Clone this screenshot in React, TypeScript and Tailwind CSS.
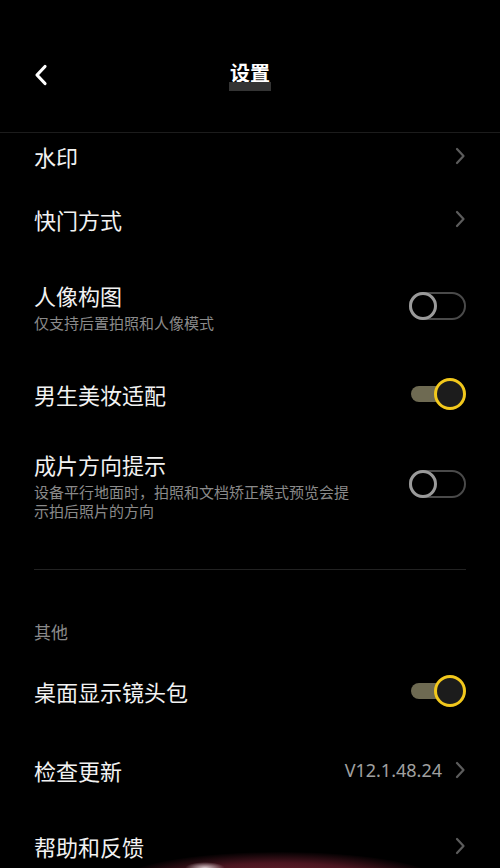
import React from "react";

const font = { fontFamily: '"Noto Sans CJK SC", "Noto Sans", sans-serif' };

function Chevron() {
  return (
    <svg width="12" height="18" viewBox="0 0 12 18" className="shrink-0">
      <path d="M3 2 L9.5 9 L3 16" fill="none" stroke="#5c5c5c" strokeWidth="2.2" strokeLinecap="round" strokeLinejoin="round" />
    </svg>
  );
}

function Toggle({ on }: { on: boolean }) {
  if (on) {
    return (
      <div className="flex items-center w-[57px] h-[32px] shrink-0 pl-[2px]">
        <div className="w-[44px] h-[16px] rounded-full bg-[#6e6a52] shrink-0" />
        <div className="-ml-[21px] w-[32px] h-[32px] rounded-full border-[3px] border-[#f2c81c] bg-[#1c1c1c] shrink-0" />
      </div>
    );
  }
  return (
    <div className="flex items-center w-[57px] h-[28px] shrink-0 rounded-full border-[2.5px] border-[#4a4a4a]">
      <div className="-ml-[2.5px] w-[28px] h-[28px] rounded-full border-[3px] border-[#9a9a9a] bg-black shrink-0" />
    </div>
  );
}

function Row({
  h,
  title,
  sub,
  right,
}: {
  h: number;
  title: string;
  sub?: string[];
  right: React.ReactNode;
}) {
  return (
    <div className="flex items-center justify-between px-[34px]" style={{ height: h }}>
      <div className="flex flex-col">
        <div className="text-[22px] leading-[30px] text-[#f2f2f2]">{title}</div>
        {sub && (
          <div className="mt-[3px] text-[15px] leading-[19px] text-[#8a8a8a] w-[330px]">
            {sub.map((s, i) => (
              <div key={i}>{s}</div>
            ))}
          </div>
        )}
      </div>
      <div className="flex items-center gap-[12px]">{right}</div>
    </div>
  );
}

export default function App() {
  return (
    <div className="relative w-[500px] h-[868px] overflow-hidden bg-black" style={font}>
      <header className="grid grid-cols-[1fr_auto_1fr] items-start h-[133px] border-b border-[#1c1c1c] px-[34px] pt-[62px]">
        <div className="pt-[2px]">
          <svg width="14" height="22" viewBox="0 0 14 22">
            <path d="M11 2.5 L3 11 L11 19.5" fill="none" stroke="#ffffff" strokeWidth="3.2" strokeLinecap="round" strokeLinejoin="round" />
          </svg>
        </div>
        <div className="flex flex-col items-center">
          <div className="text-[20px] leading-[22px] font-bold text-white">设置</div>
          <div className="-mt-[2px] w-[42px] h-[9px] bg-[#343434]" />
        </div>
        <div />
      </header>

      <Row h={46} title="水印" right={<Chevron />} />
      <Row h={80} title="快门方式" right={<Chevron />} />
      <Row h={93} title="人像构图" sub={["仅支持后置拍照和人像模式"]} right={<Toggle on={false} />} />
      <Row h={84} title="男生美妆适配" right={<Toggle on={true} />} />
      <Row
        h={96}
        title="成片方向提示"
        sub={["设备平行地面时，拍照和文档矫正模式预览会提", "示拍后照片的方向"]}
        right={<Toggle on={false} />}
      />

      <div className="mx-[34px] mt-[37px] h-px bg-[#222222]" />

      <div className="px-[34px] pt-[50px] text-[17px] leading-[24px] text-[#8a8a8a]">其他</div>

      <Row h={94} title="桌面显示镜头包" right={<Toggle on={true} />} />
      <Row
        h={64}
        title="检查更新"
        right={
          <>
            <span className="text-[18px] text-[#a0a0a0]" style={{ fontFamily: '"Noto Sans", sans-serif' }}>
              V12.1.48.24
            </span>
            <Chevron />
          </>
        }
      />
      <Row h={88} title="帮助和反馈" right={<Chevron />} />

      <div className="absolute left-[120px] top-[852px] w-[320px] h-[60px] rounded-[50%] bg-[radial-gradient(ellipse_at_center,#7a2838_0%,#4a1520_45%,transparent_72%)]" />
      <div className="absolute left-[185px] top-[862px] w-[40px] h-[12px] rounded-[50%] bg-[radial-gradient(ellipse_at_center,#d8c8cc_0%,transparent_70%)]" />
    </div>
  );
}
